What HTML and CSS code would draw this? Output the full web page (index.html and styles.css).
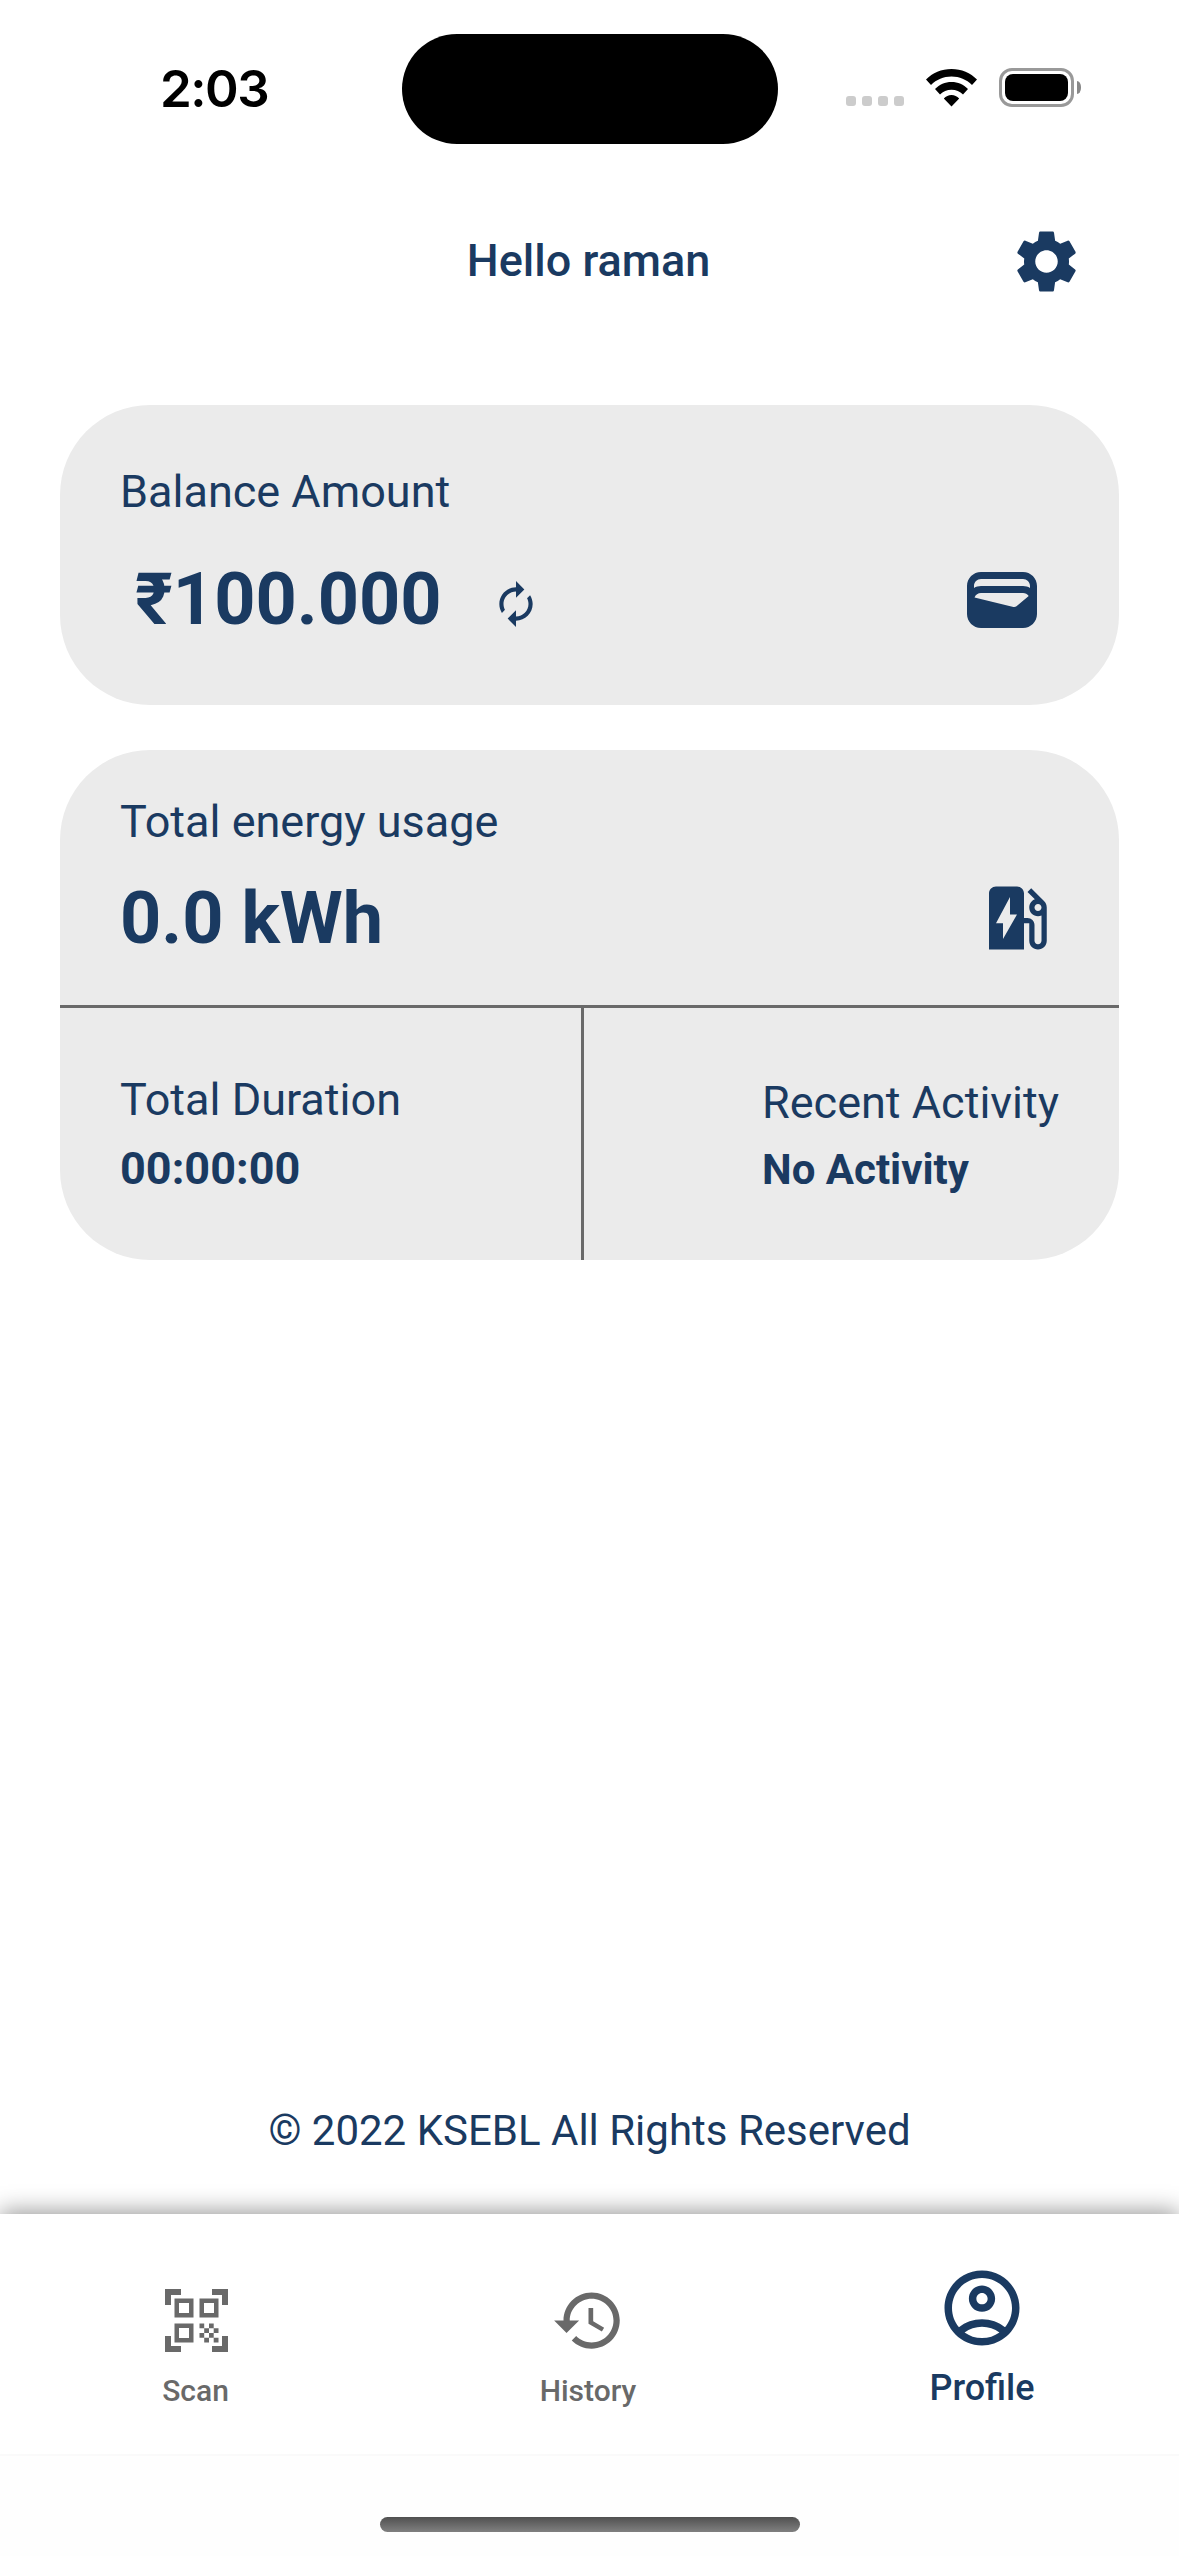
FILE: index.html
```html
<!DOCTYPE html>
<html lang="en">
<head>
<meta charset="utf-8">
<title>Profile</title>
<link rel="stylesheet" href="styles.css">
</head>
<body>
<div class="screen">
  <header class="status">
    <div class="status-left"><span class="clock">2:03</span></div>
    <div class="island"></div>
    <div class="status-right">
      <div class="dots"><i></i><i></i><i></i><i></i></div>
      <svg class="wifi" viewBox="0 0 51 38"><path d="M25.500 0C35.500 0 44.500 4 51 10.500L46 16C40.500 10.500 33.500 7.500 25.500 7.500S10.500 10.500 5 16L0 10.500C6.500 4 15.500 0 25.500 0ZM25.500 13C32 13 37.500 15.500 42 20L37 25.500C34 22.500 30 20.700 25.500 20.700S17 22.500 14 25.500L9 20C13.500 15.500 19 13 25.500 13ZM25.500 26C28.500 26 31 27.300 33.200 29.500L25.500 37.500L17.800 29.500C20 27.300 22.500 26 25.500 26Z"/></svg>
      <div class="battery"><div class="battery-case"><div class="battery-fill"></div></div><div class="battery-cap"></div></div>
    </div>
  </header>

  <div class="titlebar">
    <h1 class="title">Hello raman</h1>
    <svg class="gear" viewBox="0 0 24 24"><path d="M19.14 12.940c.04-.3.06-.61.06-.94 0-.32-.02-.64-.07-.94l2.030-1.580c.18-.14.23-.41.12-.61l-1.920-3.320c-.12-.22-.37-.29-.59-.22l-2.390.96c-.5-.38-1.030-.7-1.620-.94l-.36-2.540c-.04-.24-.24-.41-.48-.41h-3.840c-.24 0-.43.17-.47.41l-.36 2.540c-.59.24-1.130.57-1.620.94l-2.390-.96c-.22-.08-.47 0-.59.22L2.740 8.870c-.12.21-.08.47.12.61l2.030 1.580c-.05.3-.09.63-.09.94s.02.64.07.94l-2.030 1.580c-.18.14-.23.41-.12.61l1.920 3.320c.12.22.37.29.59.22l2.390-.96c.5.38 1.030.7 1.620.94l.36 2.540c.05.24.24.41.48.41h3.840c.24 0 .44-.17.47-.41l.36-2.540c.59-.24 1.130-.56 1.620-.94l2.390.96c.22.08.47 0 .59-.22l1.920-3.320c.12-.22.07-.47-.12-.61l-2.010-1.580zM12 15.600c-1.980 0-3.600-1.620-3.600-3.600s1.620-3.600 3.600-3.600 3.600 1.620 3.600 3.600-1.620 3.600-3.600 3.600z"/></svg>
  </div>

  <main class="content">
    <section class="card balance">
      <div class="label">Balance Amount</div>
      <div class="balance-row">
        <span class="value amount">₹100.000</span>
        <svg class="refresh" viewBox="0 0 24 24"><path d="M12 6v3l4-4-4-4v3c-4.420 0-8 3.580-8 8 0 1.570.46 3.030 1.240 4.260L6.700 14.800c-.45-.83-.7-1.790-.7-2.800 0-3.310 2.690-6 6-6zm6.760 1.740L17.300 9.200c.44.84.7 1.790.7 2.800 0 3.310-2.690 6-6 6v-3l-4 4 4 4v-3c4.420 0 8-3.580 8-8 0-1.570-.46-3.030-1.240-4.260z"/></svg>
        <svg class="wallet" viewBox="0 0 24 24"><path d="M18 4H6C3.790 4 2 5.790 2 8v8c0 2.210 1.790 4 4 4h12c2.210 0 4-1.790 4-4V8c0-2.210-1.790-4-4-4zm-1.860 9.770c-.24.2-.57.28-.88.2L4.150 11.250C4.450 10.520 5.160 10 6 10h12c.67 0 1.260.34 1.630.84l-3.490 2.930zM6 6h12c1.100 0 2 .9 2 2v.55C19.410 8.210 18.730 8 18 8H6c-.73 0-1.410.21-2 .55V8c0-1.100.9-2 2-2z"/></svg>
      </div>
    </section>

    <section class="card usage">
      <div class="energy">
        <div>
          <div class="label">Total energy usage</div>
          <div class="value">0.0 kWh</div>
        </div>
        <svg class="station" viewBox="0 0 24 24"><path d="M19.770 7.230l.01-.01-3.720-3.720L15 4.560l2.110 2.110c-.94.36-1.610 1.260-1.610 2.330 0 1.380 1.120 2.500 2.500 2.500.36 0 .69-.08 1-.21v7.210c0 .55-.45 1-1 1s-1-.45-1-1V14c0-1.100-.9-2-2-2h-1V5c0-1.100-.9-2-2-2H6c-1.100 0-2 .9-2 2v16h10v-7.500h1.500v5c0 1.380 1.120 2.500 2.500 2.500s2.500-1.120 2.500-2.500V9c0-.69-.28-1.320-.73-1.770zM18 10c-.55 0-1-.45-1-1s.45-1 1-1 1 .45 1 1-.45 1-1 1zM8 18v-4.500H6L10 6v5h2l-4 7z"/></svg>
      </div>
      <div class="stats">
        <div class="stat duration">
          <div class="label">Total Duration</div>
          <div class="stat-value">00:00:00</div>
        </div>
        <div class="stat activity">
          <div class="label">Recent Activity</div>
          <div class="stat-value">No Activity</div>
        </div>
      </div>
    </section>
  </main>

  <footer class="copyright">© 2022 KSEBL All Rights Reserved</footer>

  <nav class="tabs">
    <a class="tab"><svg class="tab-icon scan" viewBox="0 0 63 63"><path d="M0 0H16V6H6V16H0ZM47 0H63V16H57V6H47ZM0 47H6V57H16V63H0ZM57 47H63V63H47V57H57Z"/><path fill-rule="evenodd" d="M9.500 9.500H28.500V28.500H9.500ZM14 14V24H24V14ZM34.500 9.500H53.500V28.500H34.500ZM39 14V24H49V14ZM9.500 34.500H28.500V53.500H9.500ZM14 39V49H24V39Z"/><path d="M34.500 34.500h4.700v4.700h-4.700zM44 34.500h4.700v4.700H44zM39.200 39.200H44V44h-4.800zM48.700 39.200h4.800V44h-4.800zM34.500 44h4.700v4.700h-4.700zM44 44h4.700v4.700H44zM39.200 48.700H44v4.800h-4.800zM48.700 48.700h4.800v4.800h-4.800z"/></svg><span>Scan</span></a>
    <a class="tab"><svg class="tab-icon history" viewBox="0 0 24 24"><path d="M13 3c-4.970 0-9 4.030-9 9H1l3.890 3.890.07.14L9 12H6c0-3.870 3.130-7 7-7s7 3.130 7 7-3.130 7-7 7c-1.930 0-3.680-.79-4.940-2.060l-1.420 1.420C8.270 19.990 10.510 21 13 21c4.970 0 9-4.030 9-9s-4.030-9-9-9zm-1 5v5l4.280 2.540.72-1.210-3.500-2.080V8H12z"/></svg><span>History</span></a>
    <a class="tab active"><svg class="tab-icon profile" viewBox="0 0 24 24"><path d="M12 2C6.480 2 2 6.480 2 12s4.480 10 10 10 10-4.480 10-10S17.520 2 12 2zM7.350 18.500C8.660 17.560 10.260 17 12 17s3.340.56 4.650 1.500c-1.310.94-2.910 1.500-4.650 1.500s-3.340-.56-4.650-1.500zm10.790-1.380C16.450 15.800 14.320 15 12 15s-4.450.8-6.140 2.120C4.700 15.730 4 13.950 4 12c0-4.420 3.580-8 8-8s8 3.580 8 8c0 1.950-.7 3.730-1.860 5.120z"/><path d="M12 6c-1.930 0-3.500 1.570-3.500 3.500S10.070 13 12 13s3.500-1.570 3.500-3.500S13.930 6 12 6zm0 5c-.83 0-1.500-.67-1.500-1.500S11.170 8 12 8s1.500.67 1.500 1.500S12.830 11 12 11z"/></svg><span>Profile</span></a>
  </nav>
  <div class="home-area"><div class="home-bar"></div></div>
</div>
</body>
</html>
```
FILE: styles.css
```css
* { box-sizing: border-box; }
body { margin: 0; background: #fff; }
svg { display: block; fill: currentColor; flex: none; }

.screen {
  width: 1179px;
  height: 2556px;
  display: flex;
  flex-direction: column;
  overflow: hidden;
  background: #fff;
  color: #1a3a61;
  font-family: Roboto, "Liberation Sans", sans-serif;
}

/* Status bar */
.status {
  height: 177px;
  padding-top: 34px;
  display: grid;
  grid-template-columns: 402px 376px 401px;
  align-items: start;
  color: #000;
}
.status-left { padding-left: 160px; }
.clock { display: block; margin-top: 24px; font: 600 51px/62px Inter, sans-serif; letter-spacing: -1.5px; }
.island { height: 110px; border-radius: 55px; background: #000; }
.status-right { display: flex; padding: 34px 0 0 68px; height: 73px; }
.dots { display: flex; gap: 6px; align-self: flex-end; margin-bottom: 1px; }
.dots i { width: 10px; height: 10px; border-radius: 3px; background: #ccc; }
.wifi { width: 51px; height: 38px; margin: 1px 22px 0 22px; }
.battery { display: flex; align-items: center; gap: 3px; height: 39px; }
.battery-case { width: 75px; height: 39px; padding: 3px; border: 3px solid #999; border-radius: 13px; }
.battery-fill { height: 27px; border-radius: 8px; background: #000; }
.battery-cap { width: 4px; height: 13px; border-radius: 0 4px 4px 0 / 0 6px 6px 0; background: #888; }

/* Title bar */
.titlebar {
  height: 168px;
  display: grid;
  grid-template-columns: 1fr auto 1fr;
  align-items: center;
}
.title { grid-column: 2; margin: 0 2px 0 0; font-size: 45px; font-weight: 500; line-height: 54px; }
.gear { width: 75px; height: 75px; justify-self: end; margin: 1px 95px 0 0; }

/* Cards */
.content { display: flex; flex-direction: column; gap: 45px; padding: 60px 60px 0; }
.card { border-radius: 90px; background: #ebebeb; overflow: hidden; }
.label { font-size: 45px; line-height: 54px; white-space: nowrap; }
.value { font-size: 72px; font-weight: 700; line-height: 84px; white-space: nowrap; }

.balance { height: 300px; padding: 60px 75px 0 60px; }
.balance-row { display: flex; align-items: center; margin-top: 39px; }
.amount { margin-left: 15px; width: 302px; }
.refresh { width: 50px; height: 50px; margin: 8px 0 0 54px; }
.wallet { width: 84px; height: 84px; margin-left: auto; }

.usage { height: 510px; }
.energy {
  height: 258px;
  padding: 45px 60px 0 60px;
  display: flex;
  justify-content: space-between;
  border-bottom: 3px solid #696969;
}
.energy .value { margin-top: 28px; }
.station { width: 84px; height: 84px; margin-top: 81px; }
.stats { display: grid; grid-template-columns: 523.5px 1fr; height: 252px; }
.duration { padding: 65px 0 0 60px; border-right: 3px solid #696969; }
.activity { padding: 68px 0 0 178.5px; }
.stat-value { font-weight: 700; white-space: nowrap; }
.duration .stat-value { margin-top: 15px; font-size: 45px; line-height: 54px; }
.activity .stat-value { margin-top: 15px; font-size: 42px; line-height: 50px; }

.copyright {
  margin-top: auto;
  height: 108px;
  font-size: 42px;
  line-height: 50px;
  text-align: center;
}

/* Bottom navigation */
.tabs {
  height: 242px;
  padding-bottom: 45px;
  display: grid;
  grid-template-columns: 391px 394px 394px;
  background: #fff;
  border-bottom: 2px solid #fafafa;
  box-shadow: 0 -3px 22px rgba(0, 0, 0, .4);
}
.tab {
  display: flex;
  flex-direction: column;
  align-items: center;
  justify-content: flex-end;
  color: #696969;
  font-size: 30px;
  font-weight: 500;
  line-height: 36px;
}
.tab.active { color: #1a3a61; font-size: 36px; line-height: 42px; }
.scan { width: 63px; height: 63px; margin: 0 0 21px 1px; }
.history { width: 75px; height: 75px; margin-bottom: 15px; }
.profile { width: 90px; height: 90px; margin-bottom: 14px; }

.home-area { height: 100px; padding-top: 61px; background: #fefefe; }
.home-bar {
  width: 420px;
  height: 15px;
  margin: 0 auto;
  border-radius: 8px;
  background: linear-gradient(#505050, #808080);
}
```
